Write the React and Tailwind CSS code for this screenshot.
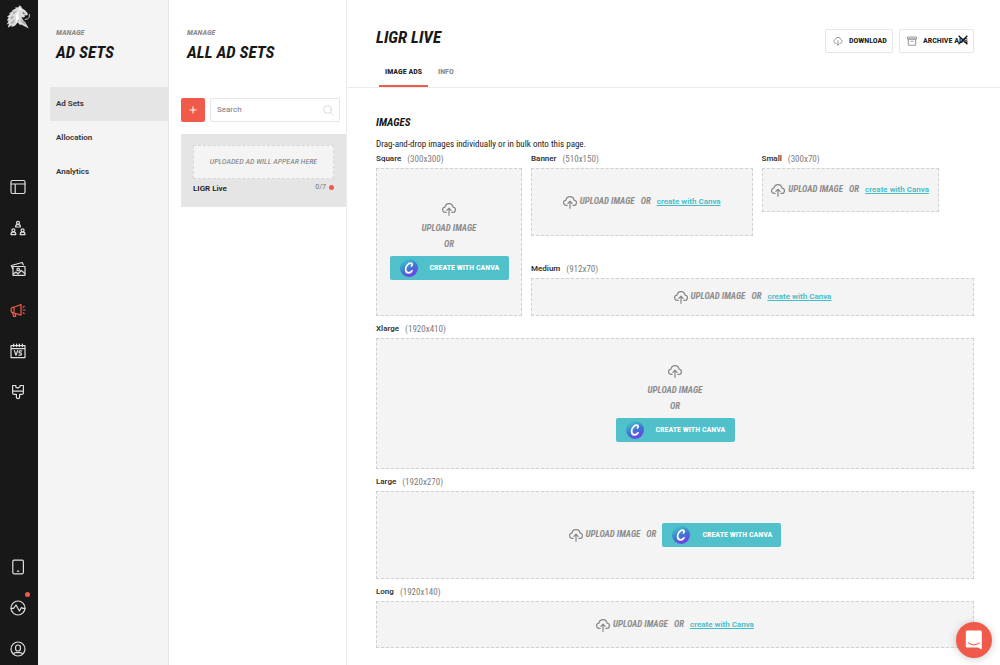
import React from "react";

const navIcons = [
  {
    label: "Layouts",
    body: (
      <>
        <rect x="1" y="1.5" width="14" height="13" rx="1.5" />
        <path d="M1 5h14M5.2 5v9.5" />
      </>
    ),
  },
  {
    label: "Teams",
    body: (
      <>
        <circle cx="8" cy="2.8" r="1.5" />
        <path d="M5.6 7c0-1.8.8-2.6 2.4-2.6s2.4.8 2.4 2.6z" />
        <circle cx="3.4" cy="10.3" r="1.5" />
        <path d="M1 14.6c0-1.8.8-2.7 2.4-2.7s2.4.9 2.4 2.7z" />
        <circle cx="12.6" cy="10.3" r="1.5" />
        <path d="M10.2 14.6c0-1.8.8-2.7 2.4-2.7s2.4.9 2.4 2.7z" />
      </>
    ),
  },
  {
    label: "Media",
    body: (
      <>
        <path d="M3 5.5h12v8.8H3zM3 8.5 1.3 4.5l11-3 .9 2.4" />
        <circle cx="8.2" cy="8.4" r="1.3" />
        <path d="m3.4 13 2.6-2 2 1.8 3.2-3.3L15 12.4" />
      </>
    ),
  },
  {
    label: "Ads",
    active: true,
    body: (
      <path d="M4 5.2 11 2.5v10.6L4 11M4 5.2v5.9M4 5.2C2 5.2 1 6.2 1 8.1S2 11 4 11M2.6 11l1 3.3h2.2L5 11.4M13 5.2l1.2-.8M13.2 8h2M13 10.8l1.2.8" />
    ),
  },
  {
    label: "Matches",
    body: (
      <>
        <path d="M1 2.6h14v12H1zM1 5.6h14M3.6 1v2.6M6.6 1v2.6M9.4 1v2.6M12.4 1v2.6" />
        <path d="m4.4 7.6 1.6 4.6 1.6-4.6M11.6 7.9H9.9c-1.2 0-1.2 2 0 2h.6c1.3 0 1.3 2.2 0 2.2H8.8" />
      </>
    ),
  },
  {
    label: "Themes",
    body: (
      <path d="M2.6 1.500h3.200v1.600l2.200 1 2-1.400V1.500h3.400v7.600c0 .8-.4 1.200-1.200 1.200H9.600v3c0 1.800-3.200 1.800-3.200 0v-3H3.800c-.8 0-1.200-.4-1.200-1.200zM2.600 7.200h10.800" />
    ),
  },
];

const bottomIcons = [
  {
    label: "Devices",
    body: (
      <>
        <rect x="2.8" y="1.2" width="10.6" height="13.6" rx="1.2" />
        <path d="M7.4 12.2h1.4" />
      </>
    ),
  },
  {
    label: "Activity",
    dot: true,
    body: (
      <>
        <circle cx="8" cy="8" r="7" />
        <path d="M1 8.4h2.6L6 5l3.4 6 2.2-3.6 1 1H15" />
      </>
    ),
  },
  {
    label: "Account",
    body: (
      <>
        <circle cx="8" cy="8" r="7" />
        <rect x="5.6" y="4" width="4.8" height="6" rx="2.2" />
        <path d="M3.4 13c.4-1.2 1.4-1.4 2.6-1.4h4c1.2 0 2.2.2 2.6 1.4" />
      </>
    ),
  },
];

function NavButton({ icon }) {
  return (
    <button
      type="button"
      aria-label={icon.label}
      className={`relative flex size-4 items-center justify-center ${icon.active ? "text-[#f05a4b]" : "text-[#dedede]"}`}
    >
      <svg viewBox="0 0 16 16" className="size-4" fill="none" stroke="currentColor" strokeWidth="1.2" strokeLinejoin="round" strokeLinecap="round">
        {icon.body}
      </svg>
      {icon.dot && <span className="absolute -top-2 -right-1 size-[5px] rounded-full bg-[#f05a4b]" />}
    </button>
  );
}

function Logo() {
  return (
    <svg viewBox="0 0 24 24" className="size-6" aria-hidden="true">
      <path fill="#dcdcdc" d="M13.600.2 12.400 2.200 9 2.600l.8.8-4 2 1.200.4L2.800 8.600l1.600.2L1 12l1.800.2L.8 15.600l1.800-.2-1.800 4 2.200-.8-1.200 4.200 4-2.600-.2 1.800 3.400-1.200 2.600-3.200 3 2.800.2-1.200 8 4.400-3.600-6.400-2.400-2.400-1.400-2.800 2.400.6 1.200-.8-.8-1.200 3.200-.4.400-1.600-2.400-3.200-3.400-2.200-.6-1.400z" />
      <path fill="none" stroke="#cfcfcf" strokeWidth="1" strokeLinecap="round" d="M23.400 9.600c.2 2.400-.6 3.800-2.200 4.400l-2 .4" />
      <path fill="#181818" d="m16.400 7.200 3 1-2 .6z" />
      <path fill="#a6a6a6" d="m6.400 7.400 4.600-2.200-3.200 4zM4 12.800l4.400-2.400-2.600 4.200zM4 18.400l5-4.400-1.600 4.400zM14.200 14.200l3.800 2.400 2.400 4-4.200-2.800zM11 16l1.400-3 .4 4z" />
      <path fill="#fff" d="m9.400 10.400 4-4.800-1.400 5 1 3-3 4.400.4-4zM13.600 2.800l2.400 2-3 .4z" />
    </svg>
  );
}

function UploadIcon() {
  return (
    <svg viewBox="0 0 14 14" className="size-[14px] shrink-0" fill="none" stroke="#858585" strokeWidth="1.2" strokeLinecap="round" strokeLinejoin="round" aria-hidden="true">
      <path d="M4.200 10.300H3.300A2.600 2.600 0 0 1 3 5.100a4.050 4.050 0 0 1 8 0 2.600 2.600 0 0 1-.3 5.200h-.9M7 13.300V6.400M4.900 8.300 7 6.200l2.100 2.100" />
    </svg>
  );
}

function CanvaButton() {
  return (
    <button type="button" className="flex h-6 w-[119px] items-center gap-3 rounded-[2px] bg-[#50c1cb] pl-[10px] text-white">
      <svg viewBox="0 0 18 18" className="size-[18px] shrink-0" aria-hidden="true">
        <defs>
          <linearGradient id="canva" x1="0.25" y1="0" x2="0.75" y2="1">
            <stop offset="0" stopColor="#3fcbc9" />
            <stop offset="0.5" stopColor="#3f78d4" />
            <stop offset="1" stopColor="#7b35e8" />
          </linearGradient>
        </defs>
        <circle cx="9" cy="9" r="9" fill="url(#canva)" />
        <path d="M11.400 7c1-.4 1.300-2.800-.7-2.900C8 4 5.500 7.600 5.600 10.400c.1 2.200 1.300 3.500 3 3.500 1.500 0 2.700-.9 3.400-2.100" fill="none" stroke="#fff" strokeWidth="1.700" strokeLinecap="round" />
      </svg>
      <span className="whitespace-nowrap font-['Roboto_Condensed',Roboto,sans-serif] text-[8px] font-bold">CREATE WITH CANVA</span>
    </button>
  );
}

const upper = "font-['Roboto_Condensed',Roboto,sans-serif] text-[9px] font-bold italic text-[#8c8c8c] whitespace-nowrap";

function Slot({ name, size, layout, box, className = "" }) {
  return (
    <section className={className}>
      <h3 className="flex h-[18px] items-center gap-[6px] leading-[18px]">
        <span className="text-[8px] font-semibold text-[#333]">{name}</span>
        <span className="font-['Roboto_Condensed',Roboto,sans-serif] text-[9px] text-[#7d7d7d]">({size})</span>
      </h3>
      <div className={`flex items-center justify-center border border-dashed border-[#d0d0d0] bg-[#f4f4f4] ${box}`}>
        {layout === "stack" ? (
          <div className="flex flex-col items-center pb-[2px]">
            <button type="button" className={`flex flex-col items-center ${upper}`}>
              <UploadIcon />
              <span className="mt-1 leading-4">UPLOAD IMAGE</span>
            </button>
            <span className={`mb-1 leading-4 ${upper}`}>OR</span>
            <CanvaButton />
          </div>
        ) : (
          <div className="flex items-center">
            <button type="button" className={`flex items-center gap-[3px] ${upper}`}>
              <UploadIcon />
              <span>UPLOAD IMAGE</span>
            </button>
            <span className={`mx-[6px] ${upper}`}>OR</span>
            {layout === "button" ? (
              <CanvaButton />
            ) : (
              <a href="#canva" className="whitespace-nowrap text-[8px] font-semibold text-[#43bcc8] underline">create with Canva</a>
            )}
          </div>
        )}
      </div>
    </section>
  );
}

function PanelTitle({ children }) {
  return (
    <header className="pl-[18px] pt-[27px]">
      <p className="font-['Roboto_Condensed',Roboto,sans-serif] text-[8px] font-bold italic leading-3 text-[#8a8a8a]">MANAGE</p>
      <h2 className="mt-[3px] whitespace-nowrap font-['Roboto_Condensed',Roboto,sans-serif] text-[17px] font-bold italic leading-5 text-[#181818]">{children}</h2>
    </header>
  );
}

export default function App() {
  return (
    <div className="flex min-h-screen bg-white font-[Roboto,sans-serif] text-[#222]">
      <nav aria-label="Main" className="flex w-[38px] shrink-0 flex-col items-center bg-[#181818] pt-[5px] pb-2 pr-[3px]">
        <Logo />
        <div className="mt-[150px] flex flex-col gap-[25px]">
          {navIcons.map((icon) => <NavButton key={icon.label} icon={icon} />)}
        </div>
        <div className="mt-auto flex flex-col gap-[25px]">
          {bottomIcons.map((icon) => <NavButton key={icon.label} icon={icon} />)}
        </div>
      </nav>

      <aside className="w-[131px] shrink-0 border-r border-[#e6e6e6] bg-[#f4f4f4]">
        <PanelTitle>AD SETS</PanelTitle>
        <ul className="mt-[25px] ml-3 text-[8px] font-semibold leading-[34px] text-[#333]">
          <li><a href="#ad-sets" aria-current="page" className="block bg-[#e5e5e5] pl-[6px]">Ad Sets</a></li>
          <li><a href="#allocation" className="block pl-[6px]">Allocation</a></li>
          <li><a href="#analytics" className="block pl-[6px]">Analytics</a></li>
        </ul>
      </aside>

      <aside className="w-[178px] shrink-0 border-r border-[#ececec] bg-white">
        <PanelTitle>ALL AD SETS</PanelTitle>
        <div className="mt-9 ml-3 mr-[6px] flex gap-[5px]">
          <button type="button" aria-label="Add ad set" className="flex size-6 shrink-0 items-center justify-center rounded-[2px] bg-[#f05a4b] text-white">
            <svg viewBox="0 0 8 8" className="size-2" stroke="currentColor" strokeWidth="1"><path d="M4 .5v7M.5 4h7" /></svg>
          </button>
          <label className="flex h-6 min-w-0 flex-1 items-center rounded-[2px] border border-[#e6e6e6] px-[6px]">
            <input type="search" aria-label="Search" placeholder="Search" className="min-w-0 flex-1 text-[8px] outline-none placeholder:text-[#7a7a7a]" />
            <svg viewBox="0 0 10 10" className="size-[10px]" fill="none" stroke="#d8d8d8" strokeWidth="1" strokeLinecap="round"><circle cx="4.5" cy="4.5" r="3.8" /><path d="m7.3 7.3 2.2 2.2" /></svg>
          </label>
        </div>
        <article className="mt-3 ml-3 h-[73px] bg-[#e5e5e5] px-3 pt-[11px]">
          <div className="flex h-[34px] items-center justify-center border border-dashed border-[#d6d6d6] bg-[#f4f4f4] font-['Roboto_Condensed',Roboto,sans-serif] text-[8px] italic text-[#777] whitespace-nowrap">UPLOADED AD WILL APPEAR HERE</div>
          <div className="mt-[3px] flex justify-between leading-3">
            <h3 className="text-[8px] font-semibold leading-[14px]">LIGR Live</h3>
            <span className="flex h-[10px] items-center gap-[3px] text-[7px] text-[#777]">0/7<i className="size-[5px] rounded-full bg-[#f05a4b]" /></span>
          </div>
        </article>
      </aside>

      <main className="min-w-0 flex-1">
        <header className="border-b border-[#ececec] pl-[29px] pr-[26px]">
          <div className="flex items-start justify-between pt-[27px]">
            <h1 className="font-['Roboto_Condensed',Roboto,sans-serif] text-[17px] font-bold italic leading-5 text-[#181818]">LIGR LIVE</h1>
            <div className="relative mt-[2px] flex gap-[6px] font-['Roboto_Condensed',Roboto,sans-serif] text-[8px] font-bold text-[#222]">
              <button type="button" className="flex h-6 w-[68px] items-center gap-[6px] whitespace-nowrap rounded-[2px] border border-[#e6e6e6] pl-[7px]">
                <svg viewBox="0 0 14 14" className="size-[10px] shrink-0" fill="none" stroke="#8a8a8a" strokeWidth="1.2" strokeLinecap="round" strokeLinejoin="round"><path d="M4.200 10.200h-.6A2.700 2.700 0 0 1 3.100 5a4 4 0 0 1 7.800 0 2.700 2.700 0 0 1-.5 5.200h-.6M7 6.400v6.400M5.300 11.200 7 12.900l1.700-1.700" /></svg>
                DOWNLOAD
              </button>
              <button type="button" className="flex h-6 w-[75px] items-center gap-[6px] whitespace-nowrap rounded-[2px] border border-[#e6e6e6] pl-[7px]">
                <svg viewBox="0 0 10 10" className="size-[10px] shrink-0" fill="none" stroke="#8a8a8a" strokeWidth="0.9"><path d="M.5 1h9v2h-9zM1.300 3h7.400v6.200H1.300zM3.800 5.300h2.400" /></svg>
                ARCHIVE ADS
              </button>
              <button type="button" aria-label="Close" className="absolute top-[6px] right-[6px]">
                <svg viewBox="0 0 10 10" className="size-[10px]" stroke="#181818" strokeWidth="1.3"><path d="m.6.8 8.800 8.400M9.400.8.6 9.200" /></svg>
              </button>
            </div>
          </div>
          <div role="tablist" className="ml-[3px] mt-[5px] flex gap-1 font-['Roboto_Condensed',Roboto,sans-serif] text-[8px] font-bold leading-[27px]">
            <button type="button" role="tab" aria-selected="true" className="border-b-2 border-[#f05a4b] px-[6px] text-[#222]">IMAGE ADS</button>
            <button type="button" role="tab" aria-selected="false" className="border-b-2 border-transparent px-[6px] text-[#8a8a8a]">INFO</button>
          </div>
        </header>

        <div className="pl-[29px] pr-[26px] pt-[27px] pb-4">
          <h2 className="font-['Roboto_Condensed',Roboto,sans-serif] text-[11px] font-bold italic leading-4 text-[#181818]">IMAGES</h2>
          <p className="mt-2 font-['Roboto_Condensed',Roboto,sans-serif] text-[9px] leading-[11px] text-[#222]">Drag-and-drop images individually or in bulk onto this page.</p>
          <div className="flex gap-[9px]">
            <Slot name="Square" size="300x300" layout="stack" box="h-[148px]" className="w-[146px] shrink-0" />
            <div className="flex min-w-0 flex-1 flex-col justify-between">
              <div className="flex gap-[9px]">
                <Slot name="Banner" size="510x150" layout="link" box="h-[68px]" className="w-1/2" />
                <Slot name="Small" size="300x70" layout="link" box="h-[44px]" className="w-2/5" />
              </div>
              <Slot name="Medium" size="912x70" layout="link" box="h-[38px]" />
            </div>
          </div>
          <div className="mt-1 flex flex-col gap-1">
            <Slot name="Xlarge" size="1920x410" layout="stack" box="h-[131px]" />
            <Slot name="Large" size="1920x270" layout="button" box="h-[88px]" />
            <Slot name="Long" size="1920x140" layout="link" box="h-[47px]" />
          </div>
        </div>
      </main>

      <button type="button" aria-label="Open chat" className="fixed bottom-[7px] right-2 flex size-9 items-center justify-center rounded-full bg-[#f05a4b] shadow-[0_1px_8px_rgba(0,0,0,0.2)]">
        <svg viewBox="0 0 18 20" className="h-5 w-[18px]" aria-hidden="true">
          <path d="M2.500.5h12.600c1 0 1.700.7 1.700 1.700v17.300l-4-1.900H2.500c-1 0-1.700-.7-1.700-1.700V2.200C.8 1.200 1.500.5 2.500.5z" fill="#fff" />
          <path d="M3.500 12.800c3 2.500 7.800 2.500 10.800 0" fill="none" stroke="#f05a4b" strokeWidth="1.1" strokeLinecap="round" />
        </svg>
      </button>
    </div>
  );
}
